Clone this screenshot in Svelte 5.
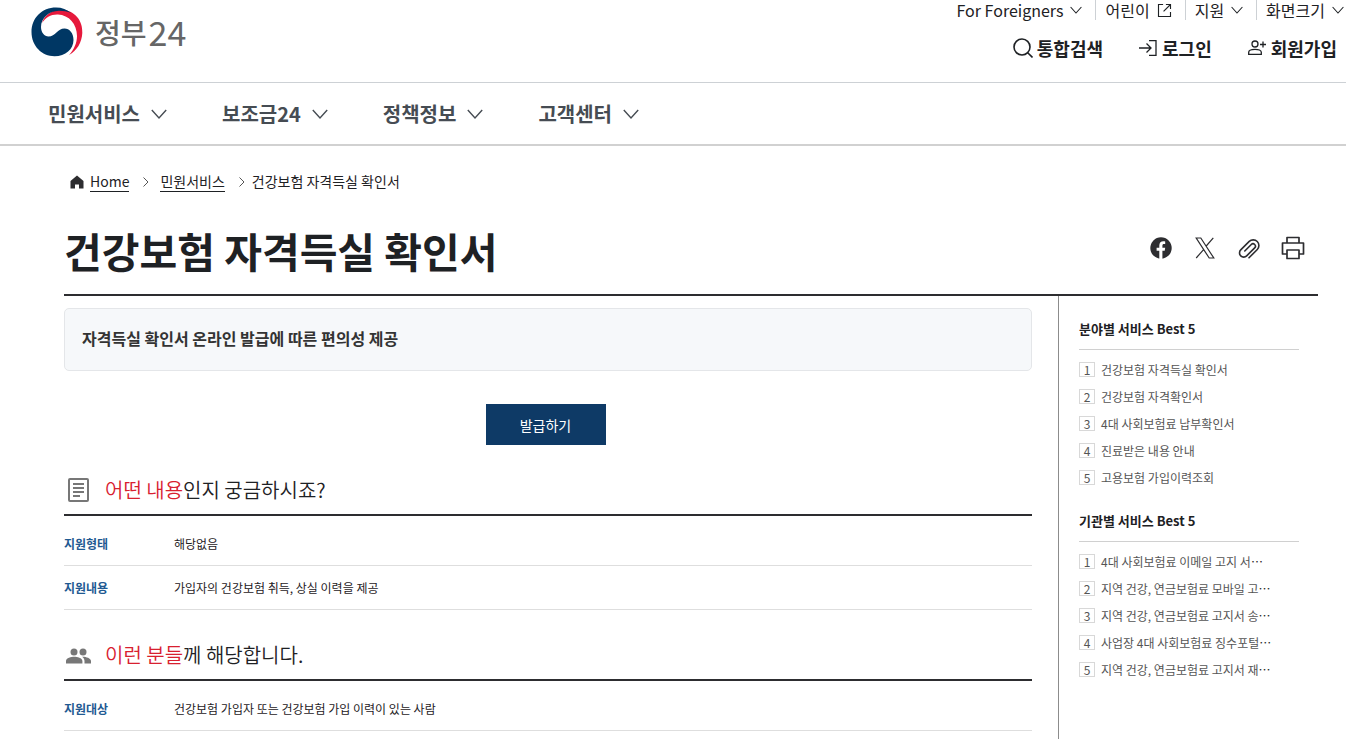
<script lang="ts">
	const utils = [
		{ label: 'For Foreigners', icon: 'chevron' },
		{ label: '어린이', icon: 'external' },
		{ label: '지원', icon: 'chevron' },
		{ label: '화면크기', icon: 'chevron' }
	]

	const menus = ['민원서비스', '보조금24', '정책정보', '고객센터']

	const sections = [
		{
			icon: 'document',
			accent: '어떤 내용',
			rest: '인지 궁금하시죠?',
			rows: [
				['지원형태', '해당없음'],
				['지원내용', '가입자의 건강보험 취득, 상실 이력을 제공']
			]
		},
		{
			icon: 'people',
			accent: '이런 분들',
			rest: '께 해당합니다.',
			rows: [['지원대상', '건강보험 가입자 또는 건강보험 가입 이력이 있는 사람']]
		}
	]

	const rankings = [
		{
			title: '분야별 서비스 Best 5',
			items: [
				{ text: '건강보험 자격득실 확인서' },
				{ text: '건강보험 자격확인서' },
				{ text: '4대 사회보험료 납부확인서' },
				{ text: '진료받은 내용 안내' },
				{ text: '고용보험 가입이력조회' }
			]
		},
		{
			title: '기관별 서비스 Best 5',
			items: [
				{ text: '4대 사회보험료 이메일 고지 서', cut: true },
				{ text: '지역 건강, 연금보험료 모바일 고', cut: true },
				{ text: '지역 건강, 연금보험료 고지서 송', cut: true },
				{ text: '사업장 4대 사회보험료 징수포털', cut: true },
				{ text: '지역 건강, 연금보험료 고지서 재', cut: true }
			]
		}
	]
</script>

{#snippet chevron(size)}
	<svg width={size} height={size} viewBox="0 0 16 16" fill="none" stroke="currentColor" stroke-width="1.4" aria-hidden="true">
		<path d="M.8 4 8 12l7.2-8" />
	</svg>
{/snippet}

{#snippet separator()}
	<svg class="sep" width="6" height="10" viewBox="0 0 6 10" fill="none" stroke="#555" aria-hidden="true">
		<path d="m.5.5 4.500 4.500-4.500 4.500" />
	</svg>
{/snippet}

<div class="page">
	<header>
		<div class="top">
			<a class="logo" href="/">
				<svg width="52" height="50" viewBox="0 0 52 50" aria-hidden="true">
					<path fill="#e6193c" d="M11 16C13 8 22 2 31 2.500 43 3.500 52 13 51.300 26 50.800 35.500 46 43.500 38 48c5-5.500 8-12 8-19C46 17 38 8 27 7.500 20 7.200 14.500 10.500 11 16z" />
					<path fill="#003764" d="M40 6C36 2.500 31 .5 25 .5 11 .5.5 11 .5 25S11 49.200 23.500 49.200c11 0 19-7 19-16.200 0-7-4-11.500-9-11.500-7 0-9 8-16 8-4 0-7.500-4-7.500-9.500C10 11 18 4 28 3.800c4.500 0 8.500.7 12 2.200z" />
				</svg>
				<span class="logo-name">정부</span><span class="logo-number">24</span>
			</a>
			<div class="tools">
				<ul class="utils">
					{#each utils as util}
						<li>
							<button type="button">
								{util.label}
								{#if util.icon === 'external'}
									<svg width="15" height="15" viewBox="0 0 16 16" fill="none" stroke="currentColor" stroke-width="1.200" aria-hidden="true">
										<path d="M6.500 1.600H1.600v12.800h12.800V9.500M9.500 1.600h4.900v4.900M14.400 1.600 7 9" />
									</svg>
								{:else}
									{@render chevron(12)}
								{/if}
							</button>
						</li>
					{/each}
				</ul>
				<ul class="account">
					<li>
						<button type="button">
							<svg width="20" height="20" viewBox="0 0 20 20" fill="none" stroke="currentColor" stroke-width="1.600" aria-hidden="true">
								<circle cx="9" cy="9" r="8" />
								<path d="m14.700 14.700 4.800 4.800" />
							</svg>
							통합검색
						</button>
					</li>
					<li>
						<a href="/login">
							<svg width="20" height="20" viewBox="0 0 20 20" fill="none" stroke="currentColor" stroke-width="1.300" aria-hidden="true">
								<path d="M11 2.600h7v14.800h-7M1 10h12M8.500 5.500 13 10l-4.500 4.500" />
							</svg>
							로그인
						</a>
					</li>
					<li>
						<a href="/join">
							<svg width="20" height="20" viewBox="0 0 20 20" fill="none" stroke="currentColor" stroke-width="1.300" aria-hidden="true">
								<circle cx="8" cy="6" r="3" />
								<path d="M1.700 16.300v-2c0-2.200 2.800-3 6.300-3s6.300.8 6.300 3v2zM16 3.500v6M13 6.500h6" />
							</svg>
							회원가입
						</a>
					</li>
				</ul>
			</div>
		</div>
		<nav>
			{#each menus as menu}
				<button type="button">
					{menu}
					{@render chevron(16)}
				</button>
			{/each}
		</nav>
	</header>

	<main>
		<ol class="breadcrumb">
			<li>
				<svg width="14" height="14" viewBox="0 0 14 14" fill="#2d2d30" aria-hidden="true">
					<path d="M7 .5 13.500 6v7.500H9V9.500H5v4H.5V6z" />
				</svg>
				<a href="/">Home</a>
			</li>
			<li>
				{@render separator()}
				<a href="/service">민원서비스</a>
			</li>
			<li>
				{@render separator()}
				<span>건강보험 자격득실 확인서</span>
			</li>
		</ol>

		<div class="title">
			<h1>건강보험 자격득실 확인서</h1>
			<div class="share">
				<button type="button" aria-label="페이스북">
					<svg width="24" height="24" viewBox="0 0 24 24">
						<circle cx="12" cy="12" r="10.700" fill="#2d2d30" />
						<path fill="#fff" d="M10.300 23v-8.200H7.600v-3h2.700V9.500c0-2.700 1.600-4.200 4-4.200.9 0 1.900.2 1.900.2v2.600h-1.200c-1.200 0-1.600.7-1.600 1.500v2.200h2.800l-.5 3h-2.300V23z" />
					</svg>
				</button>
				<button type="button" aria-label="X">
					<svg width="24" height="24" viewBox="0 0 24 24" fill="none" stroke="#2d2d30" stroke-width="1.200">
						<path d="M3.200 2h4.600l13 20h-4.600zM20.300 1.800l-7.500 8.700M10.800 13.300 3.200 22" />
					</svg>
				</button>
				<button type="button" aria-label="링크 복사">
					<svg width="24" height="24" viewBox="0 0 24 24" fill="none" stroke="#2d2d30" stroke-width="1.600" stroke-linecap="round">
						<path d="m12 21.800 8.300-8.300a5.700 5.700 0 0 0-8.060-8.060l-8.500 8.500a4.200 4.200 0 0 0 5.940 5.940l8-8a2.400 2.400 0 0 0-3.400-3.400l-6.500 6.500" />
					</svg>
				</button>
				<button type="button" aria-label="인쇄">
					<svg width="24" height="24" viewBox="0 0 24 24" fill="none" stroke="#2d2d30" stroke-width="1.700" stroke-linejoin="round">
						<path d="M6 7V1.500h12V7M6 18H1.500V7h21v11H18M6 14h12v8.500H6z" />
					</svg>
				</button>
			</div>
		</div>

		<div class="body">
			<article>
				<p class="notice">자격득실 확인서 온라인 발급에 따른 편의성 제공</p>
				<div class="action">
					<button type="button">발급하기</button>
				</div>

				{#each sections as section}
					<section>
						<h2>
							{#if section.icon === 'document'}
								<svg width="28" height="28" viewBox="0 0 28 28" fill="none" stroke="#777" stroke-width="2" aria-hidden="true">
									<rect x="5" y="3" width="19" height="22" rx="1" />
									<path d="M9 8h11M9 12h11M9 16h11M9 20h7" />
								</svg>
							{:else}
								<svg width="28" height="28" viewBox="0 0 28 28" fill="#777" aria-hidden="true">
									<circle cx="10" cy="11" r="3.500" />
									<circle cx="19" cy="11" r="3.500" />
									<path d="M2 22.500V20c0-3 5.300-4.300 8.200-4.300s8.200 1.300 8.200 4.300v2.500zM19 15.700c3 .1 8 1.400 8 4.300v2.500h-6.500V20c0-2-1-3.300-2.500-4.300z" />
								</svg>
							{/if}
							<span><em>{section.accent}</em>{section.rest}</span>
						</h2>
						<table>
							<tbody>
								{#each section.rows as [name, value]}
									<tr>
										<th scope="row">{name}</th>
										<td>{value}</td>
									</tr>
								{/each}
							</tbody>
						</table>
					</section>
				{/each}
			</article>

			<aside>
				{#each rankings as ranking}
					<section class="ranking">
						<h3>{ranking.title}</h3>
						<ol>
							{#each ranking.items as item, i}
								<li>
									<span class="rank">{i + 1}</span>
									<a href="/service/{i + 1}">{item.text}{#if item.cut}<span class="dots">⋯</span>{/if}</a>
								</li>
							{/each}
						</ol>
					</section>
				{/each}
			</aside>
		</div>
	</main>
</div>

<style>
	:global(body) {
		background: #fff;
	}

	.page {
		display: flex;
		flex-direction: column;
		min-height: 100vh;
		color: #1e2124;
		font-family: 'Noto Sans CJK KR', 'Noto Sans', sans-serif;
		font-size: 12px;
		line-height: 20px;
	}

	ul,
	ol {
		margin: 0;
		padding: 0;
		list-style: none;
	}

	h1,
	h2,
	h3,
	p {
		margin: 0;
	}

	button {
		padding: 0;
		border: 0;
		background: none;
		color: inherit;
		font: inherit;
		cursor: pointer;
	}

	a {
		color: inherit;
		text-decoration: none;
	}

	svg {
		flex: none;
	}

	/* Header */
	.top {
		display: flex;
		justify-content: space-between;
		height: 82px;
		border-bottom: 1px solid #cdd1d5;
	}

	.logo {
		display: flex;
		align-items: center;
		height: 64px;
		padding-left: 31px;
		color: #666;
	}

	.logo-name {
		margin-left: 12px;
		font-size: 28px;
		font-weight: 500;
	}

	.logo-number {
		margin-left: 2px;
		font-size: 34px;
	}

	.utils,
	.account {
		display: flex;
		justify-content: flex-end;
	}

	.utils {
		padding-right: 2px;
		font-size: 16px;
	}

	.utils li + li {
		margin-left: 13px;
		padding-left: 9px;
		border-left: 1px solid #cdd1d5;
	}

	.utils button,
	.account button,
	.account a,
	nav button {
		display: flex;
		align-items: center;
	}

	.utils button {
		gap: 7px;
	}

	.account {
		gap: 35px;
		padding: 18px 9px 0 0;
		font-size: 18px;
		font-weight: 700;
	}

	.account button,
	.account a {
		gap: 4px;
	}

	nav {
		display: flex;
		gap: 55px;
		height: 61px;
		padding-left: 48px;
		border-bottom: 2px solid #d1d1d1;
		color: #464c53;
		font-size: 20px;
		font-weight: 700;
	}

	nav button {
		gap: 11px;
	}

	/* Page title */
	main {
		display: flex;
		flex: 1;
		flex-direction: column;
		padding: 25px 28px 0 64px;
	}

	.breadcrumb {
		display: flex;
		padding-left: 6px;
		font-size: 14px;
	}

	.breadcrumb li {
		display: flex;
		align-items: center;
	}

	.breadcrumb a {
		margin-left: 6px;
		border-bottom: 1px solid #1e2124;
	}

	.breadcrumb span {
		margin-left: 2px;
		border-bottom: 1px solid transparent;
	}

	.sep {
		margin: 0 5px 0 14px;
	}

	.title {
		display: flex;
		align-items: center;
		justify-content: space-between;
		height: 88px;
		padding-top: 14px;
		border-bottom: 2px solid #2d2d30;
	}

	h1 {
		font-size: 41px;
		line-height: 60px;
	}

	.share {
		display: flex;
		gap: 20px;
		padding: 0 13px 4px 0;
	}

	.share svg {
		display: block;
	}

	/* Content */
	.body {
		display: grid;
		flex: 1;
		grid-template-columns: 1fr 260px;
		gap: 26px;
	}

	.notice {
		margin-top: 12px;
		padding: 19px 17px 21px;
		border: 1px solid #e4e6e9;
		border-radius: 5px;
		background: #f6f8fa;
		color: #333;
		font-size: 16px;
		font-weight: 700;
		line-height: 21px;
	}

	.action {
		display: flex;
		justify-content: center;
		padding: 33px 5px 24px 0;
	}

	.action button {
		width: 120px;
		height: 41px;
		background: #0e3a66;
		color: #fff;
		font-size: 14px;
	}

	h2 {
		display: flex;
		align-items: center;
		gap: 13px;
		height: 41px;
		padding-bottom: 4px;
		border-bottom: 2px solid #2d2d30;
		font-size: 20px;
		font-weight: 350;
	}

	section + section h2 {
		margin-top: 24px;
	}

	em {
		color: #d8202f;
		font-style: normal;
	}

	table {
		width: 100%;
		margin-top: 6px;
		border-collapse: collapse;
	}

	th,
	td {
		height: 43px;
		padding: 0;
		border-bottom: 1px solid #dedede;
		text-align: left;
	}

	th {
		width: 110px;
		color: #1f5a92;
	}

	/* Sidebar */
	aside {
		padding: 23px 19px 0 20px;
		border-left: 1px solid #8c8c8c;
	}

	h3 {
		padding-bottom: 10px;
		border-bottom: 1px solid #d0d0d0;
		font-size: 13px;
	}

	.ranking ol {
		padding: 6px 0 20px;
	}

	.ranking li {
		display: flex;
		align-items: center;
		gap: 6px;
		height: 27px;
		color: #555;
	}

	.rank {
		width: 14px;
		border: 1px solid #d8d8d8;
		line-height: 13px;
		text-align: center;
	}

	.dots {
		color: #222;
	}
</style>
